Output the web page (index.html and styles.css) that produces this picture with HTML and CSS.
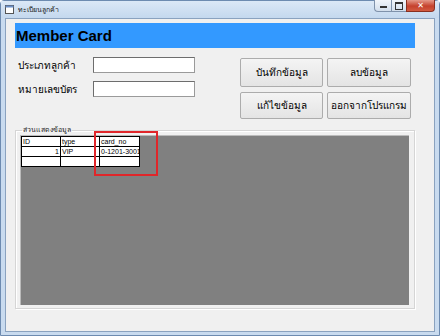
FILE: index.html
```html
<!DOCTYPE html>
<html lang="th">
<head>
    <meta charset="UTF-8">
    <title>ทะเบียนลูกค้า</title>
    <link rel="stylesheet" href="styles.css">
</head>
<body>
    <div class="window">
        <!-- แถบชื่อหน้าต่าง -->
        <div class="titlebar">
            <svg class="app-icon" width="9" height="9" viewBox="0 0 9 9">
                <rect x="0.5" y="0.5" width="8" height="8" fill="#fff" stroke="#555"/>
                <rect x="0.5" y="0.5" width="8" height="2" fill="#6a8fc7"/>
            </svg>
            <span class="title-text">ทะเบียนลูกค้า</span>
            <div class="caption-btns">
                <div class="cap cap-min"><span></span></div>
                <div class="cap cap-max"><span></span></div>
                <div class="cap cap-close">&#x2715;</div>
            </div>
        </div>

        <div class="client">
            <div class="banner">Member Card</div>

            <div class="form">
                <div class="fields">
                    <div class="field">
                        <label>ประเภทลูกค้า</label>
                        <input type="text">
                    </div>
                    <div class="field">
                        <label>หมายเลขบัตร</label>
                        <input type="text">
                    </div>
                </div>
                <div class="buttons">
                    <button>บันทึกข้อมูล</button>
                    <button>ลบข้อมูล</button>
                    <button>แก้ไขข้อมูล</button>
                    <button>ออกจากโปรแกรม</button>
                </div>
            </div>

            <!-- ส่วนแสดงข้อมูล -->
            <fieldset class="group">
                <legend>ส่วนแสดงข้อมูล</legend>
                <div class="grid">
                    <table>
                        <tr><th>ID</th><th>type</th><th>card_no</th></tr>
                        <tr><td class="num">1</td><td>VIP</td><td>0-1201-3001</td></tr>
                        <tr><td></td><td></td><td></td></tr>
                    </table>
                </div>
                <div class="mark"></div>
            </fieldset>
        </div>
    </div>
</body>
</html>
```

FILE: styles.css
```css
body {
    margin: 0;
    font-family: Tahoma, "DejaVu Sans", "Noto Sans", sans-serif;
}
.window {
    width: 440px;
    height: 336px;
    background: #c9dbef;
    box-sizing: border-box;
    border: 1px solid #6d8bb0;
    border-radius: 4px 4px 0 0;
    display: flex;
    flex-direction: column;
}
.titlebar {
    height: 17px;
    display: flex;
    align-items: center;
    padding-left: 4px;
    background: linear-gradient(#dbe8f6, #c4d8ee);
    position: relative;
}
.app-icon { margin-right: 4px; }
.title-text {
    font-size: 7px;
    color: #222;
}
.caption-btns {
    position: absolute;
    top: -1px;
    right: 4px;
    display: flex;
}
.cap {
    height: 12px;
    border: 1px solid #7f92ab;
    border-top: none;
    background: linear-gradient(#f1f5fa, #d2deec);
    display: flex;
    align-items: center;
    justify-content: center;
    box-sizing: border-box;
}
.cap-min { width: 17px; border-radius: 0 0 0 4px; border-right: none; }
.cap-min span { width: 7px; height: 2px; background: #333; margin-top: 3px; }
.cap-max { width: 15px; border-right: none; }
.cap-max span { width: 6px; height: 5px; border: 1px solid #333; border-top-width: 2px; }
.cap-close {
    width: 29px;
    border-radius: 0 0 4px 0;
    background: linear-gradient(#e59a8a, #c5412c 55%, #d35b41);
    border-color: #8a3020;
    color: #fff;
    font-size: 8px;
    font-weight: bold;
}
.client {
    margin: 0 4px 3px 4px;
    flex: 1;
    background: #f0f0f0;
    border: 1px solid #8aa2bf;
    padding: 4px 19px 0 9px;
    display: flex;
    flex-direction: column;
}
.banner {
    height: 25px;
    background: #3399ff;
    font-family: "Liberation Sans", Arial, sans-serif;
    font-weight: bold;
    font-size: 15px;
    color: #000;
    line-height: 25px;
    padding-left: 1px;
}
.form {
    display: flex;
    margin-top: 9px;
}
.fields {
    width: 225px;
    display: flex;
    flex-direction: column;
    gap: 8px;
}
.field {
    display: flex;
    align-items: center;
}
.field label {
    width: 75px;
    padding-left: 3px;
    font-size: 10px;
    color: #000;
    white-space: nowrap;
}
.field input {
    width: 102px;
    height: 16px;
    box-sizing: border-box;
    margin: 0;
    border: 1px solid #9a9a9a;
    border-top-color: #6d6d6d;
    border-left-color: #6d6d6d;
    background: #fff;
}
.buttons {
    display: grid;
    grid-template-columns: 83px 84px;
    grid-template-rows: 29px 27px;
    gap: 5px 4px;
    margin-top: 1px;
}
.buttons button {
    margin: 0;
    font-family: Tahoma, "DejaVu Sans", sans-serif;
    font-size: 10px;
    color: #000;
    background: linear-gradient(#f4f4f4, #e4e4e4);
    border: 1px solid #acacac;
    border-radius: 2px;
    padding: 0;
    white-space: nowrap;
}
.group {
    position: relative;
    margin: 8px 0 0 0;
    padding: 3px 5px 5px 4px;
    height: 182px;
    box-sizing: border-box;
    border: 1px solid #d5d5d5;
    box-shadow: inset 1px 1px 0 #fff, 1px 1px 0 #fff;
    min-width: 0;
}
.group legend {
    font-size: 7px;
    padding: 0 1px;
    margin-left: 2px;
    color: #222;
    line-height: 6px;
}
.grid {
    background: #808080;
    height: 169px;
    border-top: 1px solid #bbb;
    border-left: 1px solid #bbb;
    margin-top: -1px;
}
.grid table {
    border-collapse: collapse;
    font-family: "Liberation Sans", Arial, sans-serif;
    font-size: 7px;
    color: #000;
    background: #fff;
}
.grid th, .grid td {
    border: 1px solid #000;
    height: 9px;
    padding: 0 1px;
    text-align: left;
    font-weight: normal;
    line-height: 9px;
    white-space: nowrap;
    overflow: hidden;
}
.grid th:nth-child(1), .grid td:nth-child(1) { width: 36px; }
.grid th:nth-child(2), .grid td:nth-child(2) { width: 36px; }
.grid th:nth-child(3), .grid td:nth-child(3) { width: 37px; max-width: 37px; }
.grid td.num { text-align: right; }
.mark {
    position: absolute;
    left: 78px;
    top: -2px;
    width: 60px;
    height: 41px;
    border: 2px solid #e0262a;
}
```
